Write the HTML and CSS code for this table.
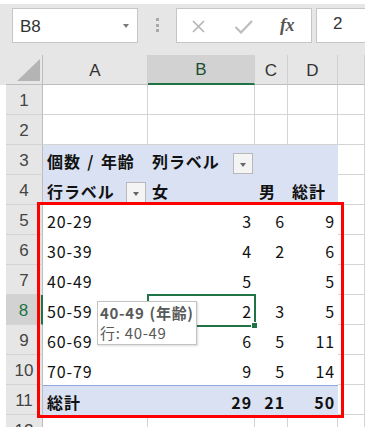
FILE: index.html
```html
<!DOCTYPE html>
<html lang="ja">
<head>
<meta charset="utf-8">
<title>Pivot</title>
<link rel="stylesheet" href="styles.css">
</head>
<body>
<div class="app">
  <div class="fbar">
    <div class="namebox"><span class="nb-text">B8</span><span class="caret"></span></div>
    <div class="dots"><i></i><i></i><i></i></div>
    <div class="fbtns">
      <svg class="ic-x" width="13" height="13" viewBox="0 0 13 13"><path d="M1 1L12 12M12 1L1 12" stroke="#b4b4b4" stroke-width="1.6" fill="none"/></svg>
      <svg class="ic-ok" width="18" height="14" viewBox="0 0 18 14"><path d="M0.5 7L6 12.5L17 1" stroke="#bdbdbd" stroke-width="2.2" fill="none"/></svg>
      <span class="fx">fx</span>
    </div>
    <div class="fval">2</div>
  </div>
  <div class="sheet">
    <div class="sp g"></div><div class="corner"><span class="tri"></span></div><div class="ch">A</div><div class="ch sel">B</div><div class="ch">C</div><div class="ch">D</div><div class="ch"></div>

    <div class="sp"></div><div class="rh">1</div><div class="c"></div><div class="c"></div><div class="c"></div><div class="c"></div><div class="c"></div>
    <div class="sp"></div><div class="rh">2</div><div class="c"></div><div class="c"></div><div class="c"></div><div class="c"></div><div class="c"></div>

    <div class="sp"></div><div class="rh">3</div><div class="pv hd b">個数 / 年齢</div><div class="pv hd b">列ラベル<span class="dd"></span></div><div class="pv hd"></div><div class="pv hd"></div><div class="c"></div>
    <div class="sp"></div><div class="rh">4</div><div class="pv hd r4 b">行ラベル<span class="dd"></span></div><div class="pv hd r4 b">女</div><div class="pv hd r4 b">男</div><div class="pv hd r4 b">総計</div><div class="c"></div>

    <div class="sp"></div><div class="rh">5</div><div class="pv">20-29</div><div class="pv n">3</div><div class="pv n">6</div><div class="pv n">9</div><div class="c"></div>
    <div class="sp"></div><div class="rh">6</div><div class="pv">30-39</div><div class="pv n">4</div><div class="pv n">2</div><div class="pv n">6</div><div class="c"></div>
    <div class="sp"></div><div class="rh">7</div><div class="pv">40-49</div><div class="pv n">5</div><div class="pv n"></div><div class="pv n">5</div><div class="c"></div>
    <div class="sp"></div><div class="rh sel">8</div><div class="pv">50-59</div><div class="pv n">2</div><div class="pv n">3</div><div class="pv n">5</div><div class="c"></div>
    <div class="sp"></div><div class="rh">9</div><div class="pv">60-69</div><div class="pv n">6</div><div class="pv n">5</div><div class="pv n">11</div><div class="c"></div>
    <div class="sp"></div><div class="rh">10</div><div class="pv">70-79</div><div class="pv n">9</div><div class="pv n">5</div><div class="pv n">14</div><div class="c"></div>

    <div class="sp"></div><div class="rh">11</div><div class="pv tot b">総計</div><div class="pv tot n b">29</div><div class="pv tot n b">21</div><div class="pv tot n b">50</div><div class="c"></div>
    <div class="sp"></div><div class="rh">12</div><div class="c"></div><div class="c"></div><div class="c"></div><div class="c"></div><div class="c"></div>
  </div>

  <div class="selbox"><span class="handle"></span></div>
  <div class="redbox"></div>
  <div class="tip">
    <div class="tip-t">40-49 (年齢)</div>
    <div class="tip-s">行: 40-49</div>
  </div>
</div>
</body>
</html>
```
FILE: styles.css
```css
html, body {
  margin: 0;
  padding: 0;
  background: #ffffff;
}

.app {
  position: relative;
  width: 365px;
  height: 427px;
  overflow: hidden;
  background: #ffffff;
}

/* formula bar */
.fbar {
  margin-top: 4px;
  height: 51px;
  box-sizing: border-box;
  padding: 4px 0 0 12px;
  background: #e6e6e6;
  display: flex;
  align-items: flex-start;
}

.namebox {
  width: 126px;
  height: 35px;
  box-sizing: border-box;
  border: 1px solid #c6c6c6;
  background: #ffffff;
  display: flex;
  align-items: center;
  padding: 3px 0 0 7px;
  font-family: "Liberation Sans", Arial, sans-serif;
  font-size: 17px;
  color: #333333;
}

.caret {
  margin-left: auto;
  margin-right: 8px;
  margin-top: -3px;
  width: 0;
  height: 0;
  border-left: 3.5px solid transparent;
  border-right: 3.5px solid transparent;
  border-top: 4px solid #7a7a7a;
}

.dots {
  margin-left: 18px;
  margin-top: 10px;
  width: 3px;
  display: flex;
  flex-direction: column;
  gap: 2.5px;
}

.dots i {
  display: block;
  width: 3px;
  height: 3px;
  background: #a9a9a9;
}

.fbtns {
  margin-left: 17px;
  width: 136px;
  height: 35px;
  box-sizing: border-box;
  border: 1px solid #c6c6c6;
  background: #ffffff;
  display: flex;
  align-items: flex-start;
}

.ic-x {
  margin-left: 15px;
  margin-top: 11px;
}

.ic-ok {
  margin-left: 30px;
  margin-top: 11px;
}

.fx {
  margin-left: 27px;
  margin-top: 6px;
  font-family: "Liberation Serif", "Times New Roman", serif;
  font-style: italic;
  font-weight: bold;
  font-size: 18px;
  color: #555555;
  letter-spacing: -0.5px;
}

.fval {
  margin-left: 4px;
  width: 49px;
  height: 35px;
  box-sizing: border-box;
  border: 1px solid #c6c6c6;
  border-right: none;
  background: #ffffff;
  padding: 5px 0 0 16px;
  font-family: "Liberation Sans", Arial, sans-serif;
  font-size: 17px;
  color: #333333;
}

/* sheet grid */
.sheet {
  display: grid;
  grid-template-columns: 6px 37px 105px 107px 33px 50px 27px;
  grid-auto-rows: 30px;
  font-family: "Noto Sans CJK JP", "Noto Sans", sans-serif;
  font-size: 16px;
  color: #111111;
}

.sheet > div {
  box-sizing: border-box;
}

.sp {
  background: #ffffff;
}

.sp.g {
  background: #e6e6e6;
}

.corner {
  background: #e6e6e6;
  border-right: 1px solid #bdbdbd;
  border-bottom: 1px solid #bdbdbd;
  position: relative;
}

.tri {
  position: absolute;
  right: 2px;
  bottom: 3px;
  width: 0;
  height: 0;
  border-left: 23px solid transparent;
  border-bottom: 22px solid #b4b4b4;
}

.ch {
  background: #e6e6e6;
  border-right: 1px solid #d0d0d0;
  border-bottom: 1px solid #bdbdbd;
  display: flex;
  align-items: center;
  justify-content: center;
  padding-top: 2px;
  font-family: "Liberation Sans", Arial, sans-serif;
  font-size: 17px;
  color: #333333;
}

.ch.sel {
  background: #d2d2d2;
  border-bottom: 2px solid #217346;
  color: #1e4d34;
}

.rh {
  background: #e6e6e6;
  border-right: 1px solid #bdbdbd;
  border-bottom: 1px solid #d4d4d4;
  display: flex;
  align-items: center;
  justify-content: center;
  padding-top: 2px;
  font-family: "Liberation Sans", Arial, sans-serif;
  font-size: 17px;
  color: #444444;
}

.rh.sel {
  background: #d2d2d2;
  border-right: 2px solid #217346;
  color: #217346;
}

.c {
  border-right: 1px solid #d4d4d4;
  border-bottom: 1px solid #d4d4d4;
}

.pv {
  background: #ffffff;
  display: flex;
  align-items: center;
  padding: 2px 0 0 4px;
  letter-spacing: 0.9px;
  word-spacing: 2px;
  white-space: pre;
}

.pv.hd {
  background: #d9e1f2;
}

.pv.r4 {
  border-bottom: 1px solid #b4c6e7;
}

.pv.tot {
  background: #d9e1f2;
  border-top: 1px solid #8ea9db;
}

.pv.n {
  justify-content: flex-end;
  padding: 2px 3px 0 0;
}

.b {
  font-weight: bold;
}

.dd {
  margin-left: auto;
  margin-right: 2px;
  margin-top: 4px;
  width: 20px;
  height: 21px;
  box-sizing: border-box;
  border: 1px solid #b8b8b8;
  background: #f4f4f4;
  position: relative;
}

.dd::after {
  content: "";
  position: absolute;
  left: 6px;
  top: 9px;
  border-left: 3.5px solid transparent;
  border-right: 3.5px solid transparent;
  border-top: 4px solid #666666;
}

/* overlays */
.selbox {
  position: absolute;
  left: 147px;
  top: 294px;
  width: 109px;
  height: 33px;
  box-sizing: border-box;
  border: 2px solid #217346;
}

.handle {
  position: absolute;
  right: -4px;
  bottom: -4px;
  width: 5px;
  height: 5px;
  background: #217346;
  border: 1px solid #ffffff;
}

.redbox {
  position: absolute;
  left: 37px;
  top: 202px;
  width: 307px;
  height: 216px;
  box-sizing: border-box;
  border: 3px solid #ff0000;
}

.tip {
  position: absolute;
  left: 97px;
  top: 301px;
  width: 100px;
  height: 44px;
  box-sizing: border-box;
  border: 1px solid #c3c3c3;
  background: #ffffff;
  box-shadow: 1px 1px 2px rgba(0, 0, 0, 0.15);
  padding: 0 0 0 2px;
  font-family: "Noto Sans CJK JP", "Noto Sans", sans-serif;
  color: #595959;
  white-space: nowrap;
}

.tip-t {
  font-weight: bold;
  font-size: 15px;
  letter-spacing: 0.7px;
  word-spacing: 1px;
  line-height: 21px;
}

.tip-s {
  font-size: 15px;
  letter-spacing: 0.7px;
  line-height: 20px;
}
```
